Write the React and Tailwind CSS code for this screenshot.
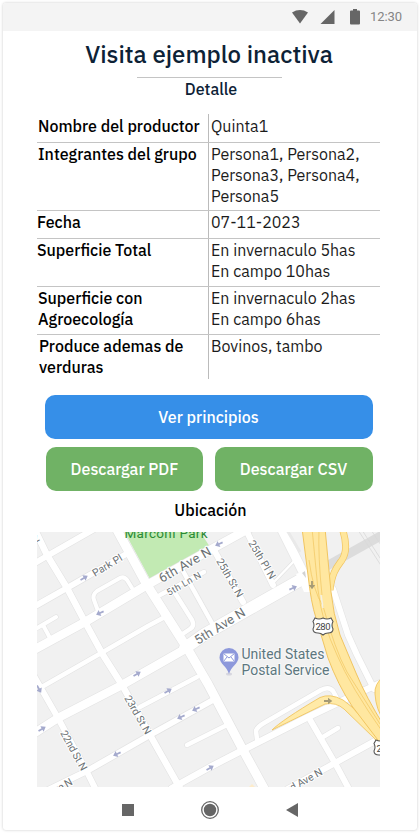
import React from "react";

const MAP_FONT = { fontFamily: 'Roboto, "Liberation Sans", sans-serif' };

const streets = [
  ["M116 528 L147 585 L187 648 L208 684 L243 750 L266 792", 9],
  ["M30 652 L85 622 L147 585 L210 550 L250 528", 8.5],
  ["M30 736 L58 718 L122 685 L187 648", 8.5],
  ["M185 648 L205 634 L258 604 L304 578", 12],
  ["M30 609 L67 588 L128 553", 6],
  ["M30 566 L47 556 L96 528", 6],
  ["M35 530 L47 555 L67 588 L85 622 L103 655 L122 685 L150 735 L181 790", 6.5],
  ["M34 676 L58 718 L87 772 L97 792", 6],
  ["M40 688 L103 652 L148 626 L163 618", 4.5],
  ["M48 790 L87 771 L150 735 L213 700", 6],
  ["M187 745 L227 725", 4.5],
  ["M140 707 L197 677", 4.5],
  ["M172 788 L210 767 L243 750 L308 717 L348 698 L385 681", 6.5],
  ["M284 791 L335 763 L375 741", 6],
  ["M309 718 L335 763 L350 791", 6],
  ["M323 737 L338 728", 4.5],
  ["M257 739 L256 731 Q257 727 264 723 L321 690 Q329 686 333 691 L339 702", 4.5],
  ["M333 589 L348 635 L357 655 L374 689", 6],
  ["M281 528 L307 580", 9],
  ["M246 530 L273 585", 6],
  ["M214 550 L243 602", 6],
  ["M273 583 L296 559", 2.5],
  ["M160 595 L204 572", 4.5],
  ["M175 593 L192 620 Q195 626 190 629 L181 635", 4.5],
  ["M183 571 L213 625", 4.5],
  ["M98 611 L94 600 Q92 595 97 591 L120 578 Q124 576 127 580 L132 588", 4],
  ["M32 631 L56 617 M43 625 L50 638", 4],
];

const arrows = [
  [84, 578, -30], [100, 613, 155], [219, 544, 155], [293, 588, -25],
  [39, 689, 60], [137, 674, -30], [42, 729, -30], [168, 691, -30],
  [181, 717, 155], [196, 709, 155], [117, 754, 155], [210, 768, -30],
];

const labels = [
  ["6th Ave N", 162, 583, -30, 58, 13],
  ["5th Ln N", 169, 596, -30, 38, 9.5],
  ["Park Pl", 95, 577, -31, 33, 10.5],
  ["5th Ave N", 198, 645, -32, 57, 13],
  ["25th Pl N", 248, 543, 59, 43, 10.5],
  ["25th St N", 216, 561, 60, 43, 10.5],
  ["23rd St N", 124, 698, 60, 43, 10.5],
  ["22nd St N", 60, 733, 61, 44, 10.5],
  ["3rd Ave N", 284, 796, -29, 45, 10.5],
  ["2nd Ave N", 34, 806, -29, 45, 10.5],
];

function Arrow({ x, y, angle, color }) {
  return (
    <path
      d="M-4 -.9 H0 V-3.2 L4.3 0 L0 3.2 V.9 H-4 Z"
      fill={color}
      transform={`translate(${x} ${y}) rotate(${angle})`}
    />
  );
}

function Shield({ x, y }) {
  return (
    <g transform={`translate(${x} ${y})`}>
      <path
        d="M-8 -8 Q-4 -6 0 -8 Q4 -6 8 -8 L10 -4.5 Q8 -1 10 3 Q10 7 5 7 Q2 7 0 9 Q-2 7 -5 7 Q-10 7 -10 3 Q-8 -1 -10 -4.5 Z"
        fill="#fff"
        stroke="#555"
        strokeWidth="1.1"
      />
      <text y="3.6" textAnchor="middle" fontSize="9.5" fill="#444" textLength="15">280</text>
    </g>
  );
}

function LocationMap() {
  return (
    <svg className="block h-[255px] w-[343px]" viewBox="37 532 343 255" style={MAP_FONT}>
      <rect x="37" y="532" width="343" height="255" fill="#f1f1f1" />
      <path d="M122 527 L150 579 L210 547 L197 527 Z" fill="#c2eab3" />
      <g fill="none" stroke="#e3e3e3" strokeLinecap="round" strokeLinejoin="round">
        {streets.map(([d, w], i) => <path key={i} d={d} strokeWidth={w + 1.2} />)}
      </g>
      <path d="M325 567 L384 534" stroke="#dcdcdc" strokeWidth="9" />
      <path d="M358 530 L382 567 M362 530 L382 561 M371 530 L383 548" stroke="#d8d8d8" strokeWidth=".8" />
      <g fill="none" stroke="#fff" strokeLinecap="round" strokeLinejoin="round">
        {streets.map(([d, w], i) => <path key={i} d={d} strokeWidth={w} />)}
      </g>
      <path d="M287 530 L300 552" stroke="#e9e9e9" strokeWidth="3" />
      <path d="M296 574 L304 592 L313 592 L307 570 Z" fill="#fff" />
      <path d="M302 573 L306 578 L305 571 Z" fill="#d2d2d2" />
      <path d="M342 528 C347 542 347 552 342 560 C337 567 332 572 330 590" fill="none" stroke="#f1c560" strokeWidth="7" />
      <path d="M342 528 C347 542 347 552 342 560 C337 567 332 572 330 590" fill="none" stroke="#ffe69b" strokeWidth="5.6" />
      <path d="M272 730 Q282 720 320 697.500 Q330 693 343 700 L352 707 L384 742 V750 L374 738 L344 709 Q336 702 325 704 Z" fill="#ffeaa7" stroke="#f1c560" strokeWidth=".9" />
      <path d="M384 676 Q374 684 375 694 Q376 710 384 720" fill="#ffe69b" stroke="#f1c560" strokeWidth=".9" />
      <path d="M302 528 L308 575 Q311 603 316 618 L328 658 Q338 685 352 706 L384 748 V726 Q366 697 356 673 L340 635 Q333 613 331 592 L325 528 Z" fill="#ffe7a0" stroke="#f1c560" strokeWidth="1" />
      <path d="M312 528 L318 590 Q322 623 337 655 Q350 686 384 734 M309 560 Q313 591 323 606 Q335 650 347 672 L380 724 M319 528 Q318 558 322 595" fill="none" stroke="#f1c560" strokeWidth=".7" />
      <path d="M321 595 L323 608" stroke="#f4f1e6" strokeWidth="1.5" />
      {arrows.map(([x, y, a], i) => <Arrow key={i} x={x} y={y} angle={a} color="#a5aacd" />)}
      <Arrow x={312} y={585} angle={90} color="#a59a75" />
      <Arrow x={328} y={701} angle={0} color="#a59a75" />
      <path d="M249 787 L252 784 L255 787 Z" fill="#fdeccb" />
      <text x="124.500" y="538" fontSize="13.5" fill="#2b8a35" textLength="83">Marconi Park</text>
      <text x="35" y="543" fontSize="12" fill="#666" transform="rotate(-30 35 543)">z</text>
      <g fill="#6c7275" stroke="#fff" strokeWidth="2" paintOrder="stroke" strokeLinejoin="round">
        {labels.map(([t, x, y, a, len, size]) => (
          <text key={t} x={x} y={y} fontSize={size} textLength={len} transform={`rotate(${a} ${x} ${y})`}>{t}</text>
        ))}
      </g>
      <g fill="#5d777f" fontSize="14" stroke="#f8f8f8" strokeWidth="2" paintOrder="stroke">
        <text x="241.500" y="659" textLength="83">United States</text>
        <text x="241.500" y="674.500" textLength="88">Postal Service</text>
      </g>
      <ellipse cx="229" cy="674" rx="3" ry="1.500" fill="#d6d6df" />
      <path d="M229 648 a9.500 9.500 0 0 1 9.500 9.500 c0 6 -7.500 9 -9.500 16.500 c-2 -7.500 -9.500 -10.500 -9.500 -16.500 a9.500 9.500 0 0 1 9.500 -9.500 Z" fill="#8d98db" />
      <rect x="223.500" y="653.500" width="11" height="8" fill="#fff" />
      <path d="M223.500 653.500 L229 658 L234.500 653.500 M223.500 661.500 L227 657 M234.500 661.500 L231 657" fill="none" stroke="#8d98db" strokeWidth="1" />
      <Shield x={323} y={626} />
      <Shield x={384} y={748} />
    </svg>
  );
}

const rows = [
  { label: ["Nombre del productor"], value: ["Quinta1"], box: "h-7 pt-[2px]", pad: "pl-px" },
  { label: ["Integrantes del grupo"], value: ["Persona1, Persona2,", "Persona3, Persona4,", "Persona5"], box: "h-[68px] pt-px border-t", pad: "pl-px" },
  { label: ["Fecha"], value: ["07-11-2023"], box: "h-7 pt-px border-t", pad: "" },
  { label: ["Superficie Total"], value: ["En invernaculo 5has", "En campo 10has"], box: "h-12 pt-px border-t", pad: "" },
  { label: ["Superficie con", "Agroecología"], value: ["En invernaculo 2has", "En campo 6has"], box: "h-12 pt-px border-t", pad: "pl-px" },
  { label: ["Produce ademas de", "verduras"], value: ["Bovinos, tambo"], box: "h-[45px] pt-px border-t", pad: "pl-[2px]" },
];

function Row({ label, value, box, pad }) {
  return (
    <div className={`flex border-[#c4c4c4] ${box}`}>
      <div className={`w-[174px] shrink-0 font-medium ${pad}`}>
        {label.map((t) => <div key={t}>{t}</div>)}
      </div>
      <div className="text-[#1b1b1b]">
        {value.map((t) => <div key={t}>{t}</div>)}
      </div>
    </div>
  );
}

export default function App() {
  return (
    <div className="h-[834px] w-[420px] overflow-hidden bg-white px-[3px] pt-[3px] font-['IBM_Plex_Sans','Open_Sans',sans-serif] text-base text-black">
      <div className="flex h-[827px] w-[414px] flex-col rounded-[3px] bg-white shadow-[0_0_3px_rgba(0,0,0,0.22)]">
        <header className="flex h-7 shrink-0 items-center rounded-t-[3px] bg-[#f4f4f4] pl-[289px]">
          <svg className="h-4 w-[16px]" viewBox="0 0 16 16"><path d="M0 3.400 Q8 -1.500 16 3.400 L8 14.500 Z" fill="#666" /></svg>
          <svg className="ml-3 h-4 w-[15px]" viewBox="0 0 15 16"><path d="M0.500 15 L14.500 1 V15 Z" fill="#666" /></svg>
          <svg className="ml-[15px] h-4 w-[10px]" viewBox="0 0 10 16"><path d="M3 0 H7 V1.500 H9 Q10 1.500 10 2.500 V14.500 Q10 15.500 9 15.500 H1 Q0 15.500 0 14.500 V2.500 Q0 1.500 1 1.500 H3 Z" fill="#666" /></svg>
          <span className="ml-[10px] font-['Roboto',sans-serif] text-[13px] tracking-[-0.1px] text-[#858585]">12:30</span>
        </header>
        <h1 className="mt-[7px] h-8 whitespace-nowrap pr-[2px] text-center text-2xl leading-8 font-medium text-[#0d2236]">Visita ejemplo inactiva</h1>
        <div className="mt-[7px] ml-[134px] h-px w-[145px] bg-[#c4c4c4]" />
        <h2 className="h-[22px] pl-[2px] text-center leading-[22px] font-medium text-[#0d2236]">Detalle</h2>
        <section className="mt-[14px] ml-[34px] flex h-[265px] w-[343px] flex-col whitespace-nowrap bg-[linear-gradient(#bbb,#bbb)] bg-[length:1px_100%] bg-[position:171px_0] bg-no-repeat leading-[21px]">
          {rows.map((r) => <Row key={r.label[0]} {...r} />)}
        </section>
        <div className="mt-4 ml-[42px] flex w-[328px] flex-col gap-2 font-medium text-white">
          <button className="h-11 rounded-[10px] bg-[#368fe8] pr-px">Ver principios</button>
          <div className="flex gap-3 pl-px">
            <button className="h-11 w-[157px] whitespace-nowrap rounded-[10px] bg-[#70b265]">Descargar PDF</button>
            <button className="h-11 w-[158px] whitespace-nowrap rounded-[10px] bg-[#70b265] pr-px">Descargar CSV</button>
          </div>
        </div>
        <h2 className="mt-2 h-[22px] pl-px text-center leading-[22px] font-medium">Ubicación</h2>
        <div className="mt-[11px] ml-[34px] h-[255px] w-[343px]"><LocationMap /></div>
        <nav className="mt-[14px] ml-[119px] flex items-center gap-[67px]">
          <svg className="h-[18px] w-3" viewBox="0 0 12 18"><path d="M0 3 H12 V15 H0 Z" fill="#666" /></svg>
          <svg className="h-[18px] w-[18px]" viewBox="0 0 18 18"><circle cx="9" cy="9" r="8.300" fill="none" stroke="#666" strokeWidth="1.300" /><circle cx="9" cy="9" r="6.200" fill="#666" /></svg>
          <svg className="h-[18px] w-3" viewBox="0 0 12 18"><path d="M0 9 L12 2 V16 Z" fill="#666" /></svg>
        </nav>
      </div>
    </div>
  );
}
